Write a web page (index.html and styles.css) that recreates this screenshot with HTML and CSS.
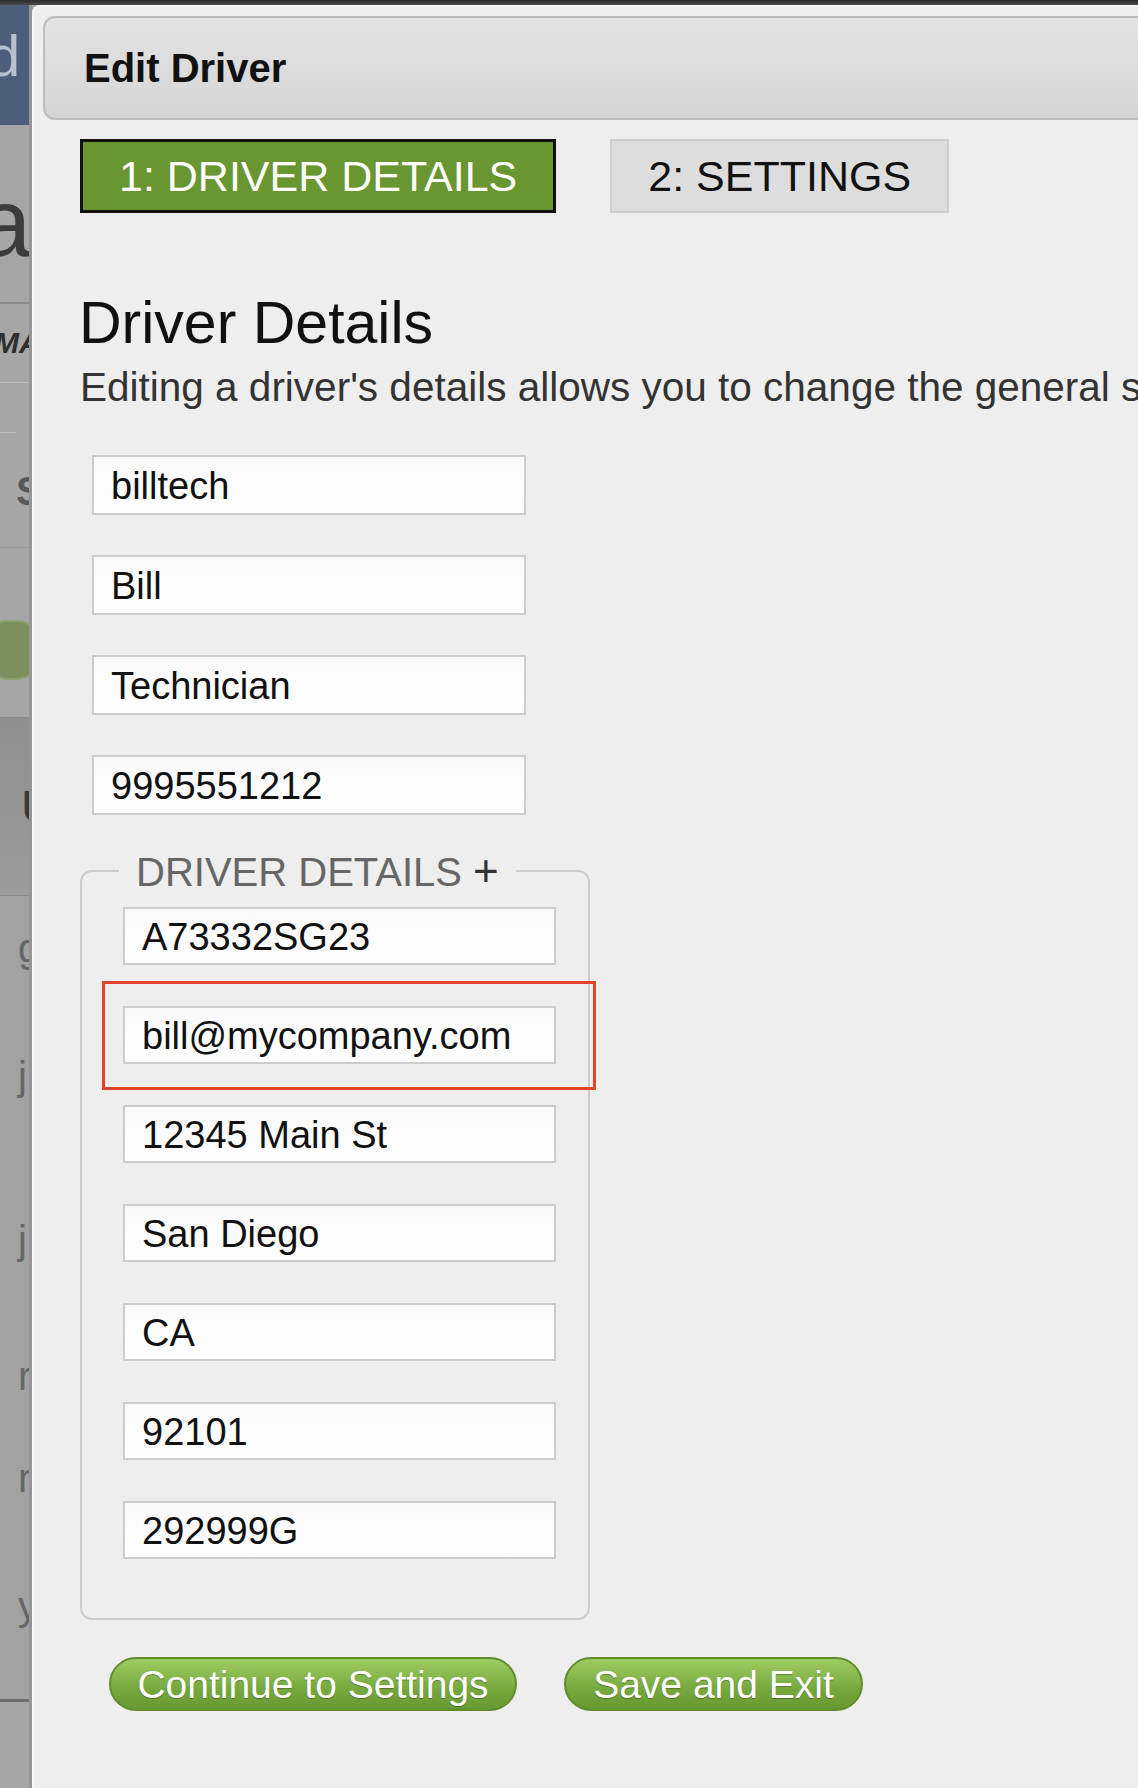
FILE: index.html
```html
<!DOCTYPE html>
<html lang="en">
<head>
  <meta charset="UTF-8" />
  <title>Edit Driver</title>
  <link rel="stylesheet" href="styles.css">
</head>
<body>
  <div class="topbar"></div>

  <div class="page">
    <!-- the page behind the dialog, only a sliver shows -->
    <div class="behind">
      <div class="peek brand"><span class="peek-d">d</span></div>
      <div class="peek title"><span class="peek-a">a</span></div>
      <div class="peek colhead"><span>MA</span></div>
      <div class="peek filters">
        <div class="short-rule"></div>
        <span class="peek-s">S</span>
      </div>
      <div class="peek toggle"><div class="pill"></div></div>
      <div class="peek group"><span>U</span></div>
      <div class="peek list">
        <span class="row-g">g</span>
        <span class="row-j1">j</span>
        <span class="row-j2">j</span>
        <span class="row-r1">r</span>
        <span class="row-r2">r</span>
        <span class="row-y">y</span>
      </div>
      <div class="peek footer"></div>
    </div>

    <div class="modal">
      <div class="modal-header">Edit Driver</div>

      <div class="modal-body">
        <div class="steps">
          <div class="step active">1: DRIVER DETAILS</div>
          <div class="step">2: SETTINGS</div>
        </div>

        <h1>Driver Details</h1>
        <p class="intro">Editing a driver's details allows you to change the general s</p>

        <div class="fields">
          <input type="text" value="billtech">
          <input type="text" value="Bill">
          <input type="text" value="Technician">
          <input type="text" value="9995551212">
        </div>

        <fieldset class="more">
          <legend>DRIVER DETAILS <span class="plus">+</span></legend>
          <input type="text" value="A73332SG23">
          <div class="highlight">
            <input type="text" value="bill@mycompany.com">
            <div class="highlight-box"></div>
          </div>
          <input type="text" value="12345 Main St">
          <input type="text" value="San Diego">
          <input type="text" value="CA">
          <input type="text" value="92101">
          <input type="text" value="292999G">
        </fieldset>

        <div class="actions">
          <button class="btn continue">Continue to Settings</button>
          <button class="btn save">Save and Exit</button>
        </div>
      </div>
    </div>
  </div>
</body>
</html>
```

FILE: styles.css
```css
body {
  margin: 0;
  font-family: 'Liberation Sans', Arial, Helvetica, sans-serif;
  background-color: #a4a4a4;
  color: #111;
  overflow: hidden;
}

.topbar {
  height: 5px;
  background: linear-gradient(#2b2b2b, #4a4a4a);
}

.page {
  display: flex;
  height: 1783px;
}

/* background page sliver */
.behind {
  width: 32px;
  flex-shrink: 0;
  overflow: hidden;
  display: flex;
  flex-direction: column;
  background-color: #a6a6a6;
  border-right: 3px solid #959595;
  box-sizing: border-box;
}

.peek {
  position: relative;
  overflow: hidden;
  white-space: nowrap;
  color: #4a4a4a;
}

.brand {
  height: 120px;
  background-color: #4c5e7a;
}

.peek-d {
  display: block;
  margin: 22px 0 0 -12px;
  font-size: 58px;
  line-height: 58px;
  color: #b7c0cd;
}

.title {
  height: 177px;
}

.peek-a {
  display: block;
  margin: 48px 0 0 -22px;
  font-size: 96px;
  line-height: 100px;
  color: #3c3c3c;
}

.colhead {
  height: 80px;
  border-top: 2px solid #8b8b8b;
  box-sizing: border-box;
}

.colhead span {
  display: block;
  margin: 22px 0 0 -6px;
  font-size: 30px;
  font-weight: bold;
  font-style: italic;
  color: #2e2e2e;
}

.filters {
  height: 165px;
  border-top: 1px solid #b9b9b9;
  box-sizing: border-box;
}

.short-rule {
  width: 16px;
  height: 1px;
  margin-top: 49px;
  background-color: #bdbdbd;
}

.peek-s {
  display: block;
  margin: 36px 0 0 16px;
  font-size: 40px;
  font-weight: bold;
  color: #585858;
}

.toggle {
  height: 170px;
  border-top: 1px solid #999;
  box-sizing: border-box;
}

.pill {
  width: 60px;
  height: 56px;
  margin: 72px 0 0 -20px;
  border-radius: 28px;
  background-color: #7b8f5e;
  border: 2px solid #8fa173;
}

.group {
  height: 178px;
  border-top: 1px solid #8a8a8a;
  background: linear-gradient(#8f8f8f, #9b9b9b);
  box-sizing: border-box;
}

.group span {
  display: block;
  margin: 64px 0 0 22px;
  font-size: 44px;
  font-weight: bold;
  color: #3a3a3a;
}

.list {
  height: 804px;
  border-top: 1px solid #8a8a8a;
  box-sizing: border-box;
  background-color: #a2a2a2;
}

.list span {
  position: absolute;
  left: 18px;
  font-size: 40px;
  color: #666;
}

.row-g { top: 30px; }
.row-j1 { top: 158px; }
.row-j2 { top: 322px; }
.row-r1 { top: 458px; }
.row-r2 { top: 560px; }
.row-y { top: 688px; }

.footer {
  flex: 1;
  border-top: 3px solid #6c6c6c;
}

/* dialog */
.modal {
  flex: 1;
  min-width: 0;
  overflow: hidden;
  background-color: #eeeeee;
  border-top: 2px solid #f6f6f6;
  border-left: 2px solid #f6f6f6;
  border-top-left-radius: 8px;
  padding-top: 9px;
}

.modal-header {
  height: 104px;
  margin-left: 9px;
  margin-right: -20px;
  padding-left: 39px;
  box-sizing: border-box;
  display: flex;
  align-items: center;
  background: linear-gradient(#e3e3e3, #d5d5d5);
  border: 2px solid #bdbdbd;
  border-radius: 12px;
  font-size: 40px;
  font-weight: bold;
  color: #111;
}

.modal-body {
  padding: 19px 0 0 46px;
}

.steps {
  display: flex;
  gap: 54px;
}

.step {
  height: 74px;
  box-sizing: border-box;
  padding: 0 36px;
  display: flex;
  align-items: center;
  background-color: #dddddd;
  border: 2px solid #cdcdcd;
  font-size: 43px;
  color: #111;
}

.step.active {
  background-color: #6a9632;
  border: 3px solid #111;
  color: #fff;
}

h1 {
  margin: 77px 0 0 -1px;
  font-size: 59px;
  font-weight: normal;
  line-height: 1.15;
  color: #111;
}

.intro {
  margin: 6px 0 0 0;
  font-size: 40.5px;
  line-height: 1.15;
  color: #333;
  white-space: nowrap;
}

input {
  display: block;
  width: 434px;
  height: 60px;
  margin: 0;
  padding: 2px 17px 0;
  box-sizing: border-box;
  font-family: 'Liberation Sans', Arial, Helvetica, sans-serif;
  font-size: 38px;
  color: #111;
  background: linear-gradient(#f9f9f9, #ffffff);
  border: 2px solid #cccccc;
  outline: none;
}

.fields {
  display: flex;
  flex-direction: column;
  gap: 40px;
  margin: 45px 0 0 12px;
}

.more {
  width: 510px;
  box-sizing: border-box;
  margin: 31px 0 0 0;
  padding: 11px 32px 59px 41px;
  border: 2px solid #cccccc;
  border-radius: 12px;
  display: flex;
  flex-direction: column;
  gap: 41px;
}

.more input {
  width: 433px;
  height: 58px;
}

legend {
  margin-left: -4px;
  padding: 0 17px;
  font-size: 40px;
  color: #666;
}

.plus {
  font-size: 44px;
  color: #333;
}

.highlight {
  position: relative;
}

.highlight-box {
  position: absolute;
  left: -21px;
  top: -25px;
  right: -40px;
  bottom: -26px;
  border: 3px solid #e0452b;
}

.actions {
  display: flex;
  gap: 47px;
  margin: 37px 0 0 29px;
}

.btn {
  height: 54px;
  padding: 0 20px;
  font-family: 'Liberation Sans', Arial, Helvetica, sans-serif;
  font-size: 39px;
  color: #fff;
  text-shadow: 0 1px 1px rgba(0,0,0,0.3);
  background: linear-gradient(#9fcc63, #76a83d 60%, #689a32);
  border: 2px solid #5f8d2e;
  border-radius: 27px;
  line-height: 1;
}

.btn.continue {
  width: 408px;
}

.btn.save {
  width: 299px;
}
```
